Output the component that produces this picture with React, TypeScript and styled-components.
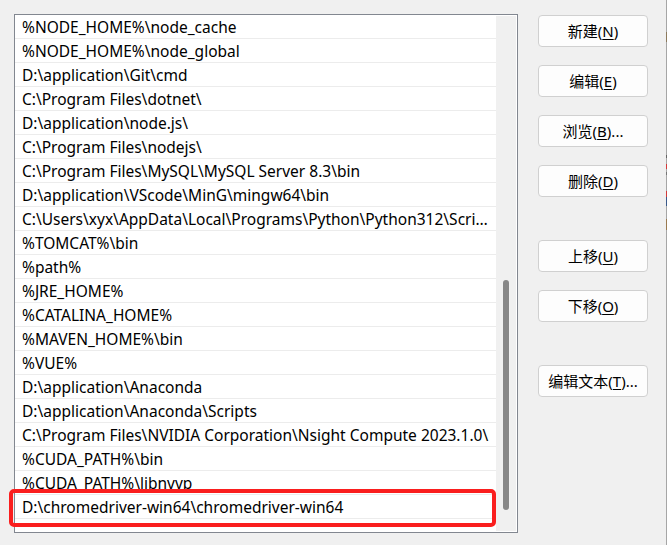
import React from "react";
import styled, { createGlobalStyle } from "styled-components";

const Global = createGlobalStyle`
  html, body { margin: 0; padding: 0; background: #f0f0f0; }
  * { box-sizing: border-box; }
`;

const FONT = `"Noto Sans", "Noto Sans CJK SC", sans-serif`;

const Page = styled.div`
  position: relative;
  width: 667px;
  height: 545px;
  display: flex;
  overflow: hidden;
  background: #f0f0f0;
  font-family: ${FONT};
`;

const Content = styled.div`
  display: flex;
  align-items: flex-start;
  padding: 14px 0 0 14px;
`;

const ListBox = styled.div`
  width: 504px;
  height: 519px;
  border: 1px solid #828790;
  background: #ffffff;
  display: flex;
  flex-shrink: 0;
`;

const RowList = styled.div`
  width: 481px;
  flex-shrink: 0;
  overflow: hidden;
`;

const Row = styled.div`
  height: 24px;
  border-bottom: 1px solid #ececec;
  padding: 2px 4px 0 7px;
  line-height: 21px;
  font-size: 15.5px;
  color: #000;
  white-space: nowrap;
  overflow: hidden;
  text-overflow: ellipsis;
`;

const Track = styled.div`
  width: 20px;
  margin: 1px 1px 1px 0;
  background: #f0f0f0;
  padding: 264px 0 0 7px;
`;

const Thumb = styled.div`
  width: 6px;
  height: 230px;
  background: #878787;
  border-radius: 3px;
`;

const ButtonColumn = styled.div`
  margin-left: 20px;
  padding-top: 1px;
  display: flex;
  flex-direction: column;
`;

const Button = styled.div<{ $gap: number }>`
  width: 110px;
  height: 32px;
  margin-top: ${(p) => p.$gap}px;
  border: 1px solid #d0d0d0;
  border-radius: 4px;
  background: #fdfdfd;
  display: flex;
  align-items: center;
  justify-content: center;
  padding-bottom: 1px;
  font-size: 15px;
  color: #000;
  white-space: nowrap;
`;

const Key = styled.span`
  text-decoration: underline;
  text-underline-offset: 2px;
`;

const Edge = styled.div`
  margin-left: auto;
  width: 1px;
  height: 545px;
  flex-shrink: 0;
  background: linear-gradient(
    to bottom,
    #a6a6a6 0px, #a6a6a6 32px,
    #8c7a5c 32px, #8c7a5c 42px,
    #a6a6a6 42px, #a6a6a6 155px,
    #666 155px, #666 158px,
    #a6a6a6 158px, #a6a6a6 164px,
    #d43a3a 164px, #d43a3a 169px,
    #a6a6a6 169px, #a6a6a6 172px,
    #777 172px, #777 175px,
    #a6a6a6 175px, #a6a6a6 191px,
    #d43a3a 191px, #d43a3a 197px,
    #3a5a8a 197px, #3a5a8a 206px,
    #a6a6a6 206px, #a6a6a6 219px,
    #9a7a50 219px, #9a7a50 230px,
    #a6a6a6 230px
  );
`;

const Highlight = styled.div`
  position: absolute;
  left: 9px;
  top: 489px;
  width: 487px;
  height: 38px;
  border: 4px solid #fa1e1e;
  border-radius: 5px;
  pointer-events: none;
`;

const rows = [
  "%NODE_HOME%\\node_cache",
  "%NODE_HOME%\\node_global",
  "D:\\application\\Git\\cmd",
  "C:\\Program Files\\dotnet\\",
  "D:\\application\\node.js\\",
  "C:\\Program Files\\nodejs\\",
  "C:\\Program Files\\MySQL\\MySQL Server 8.3\\bin",
  "D:\\application\\VScode\\MinG\\mingw64\\bin",
  "C:\\Users\\xyx\\AppData\\Local\\Programs\\Python\\Python312\\Scripts\\",
  "%TOMCAT%\\bin",
  "%path%",
  "%JRE_HOME%",
  "%CATALINA_HOME%",
  "%MAVEN_HOME%\\bin",
  "%VUE%",
  "D:\\application\\Anaconda",
  "D:\\application\\Anaconda\\Scripts",
  "C:\\Program Files\\NVIDIA Corporation\\Nsight Compute 2023.1.0\\",
  "%CUDA_PATH%\\bin",
  "%CUDA_PATH%\\libnvvp",
  "D:\\chromedriver-win64\\chromedriver-win64",
];

const buttons: { label: string; key: string; tail: string; gap: number }[] = [
  { label: "新建(", key: "N", tail: ")", gap: 0 },
  { label: "编辑(", key: "E", tail: ")", gap: 18 },
  { label: "浏览(", key: "B", tail: ")...", gap: 18 },
  { label: "删除(", key: "D", tail: ")", gap: 18 },
  { label: "上移(", key: "U", tail: ")", gap: 43 },
  { label: "下移(", key: "O", tail: ")", gap: 18 },
  { label: "编辑文本(", key: "T", tail: ")...", gap: 43 },
];

export default function App() {
  return (
    <Page>
      <Global />
      <Content>
        <ListBox>
          <RowList>
            {rows.map((r) => (
              <Row key={r}>{r}</Row>
            ))}
          </RowList>
          <Track>
            <Thumb />
          </Track>
        </ListBox>
        <ButtonColumn>
          {buttons.map((b) => (
            <Button key={b.label} $gap={b.gap}>
              {b.label}
              <Key>{b.key}</Key>
              {b.tail}
            </Button>
          ))}
        </ButtonColumn>
      </Content>
      <Edge />
      <Highlight />
    </Page>
  );
}
